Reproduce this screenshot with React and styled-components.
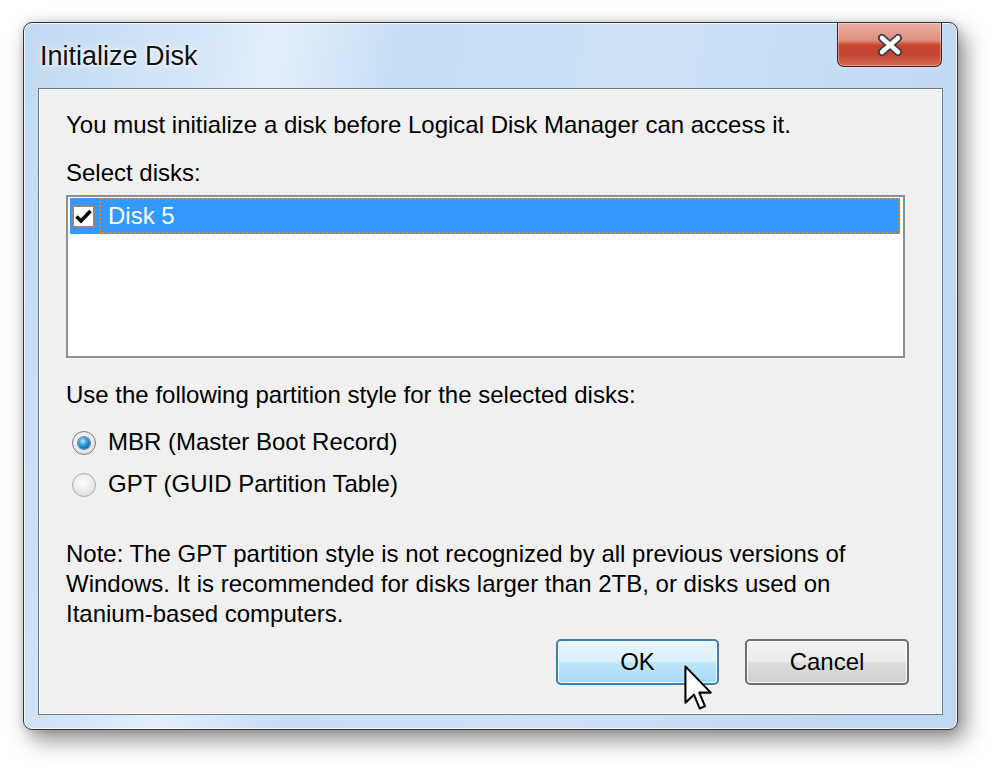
import styled, { createGlobalStyle } from "styled-components";

const GlobalStyle = createGlobalStyle`
  html, body {
    margin: 0;
    padding: 0;
    background: #ffffff;
  }
  body {
    font-family: "Liberation Sans", Arial, sans-serif;
    color: #000;
  }
`;

const Page = styled.div`
  width: 1000px;
  height: 772px;
  padding: 22px 0 0 23px;
  box-sizing: border-box;
  overflow: hidden;
`;

const Window = styled.div`
  position: relative;
  width: 935px;
  box-sizing: border-box;
  border: 1px solid #30363d;
  border-radius: 9px;
  padding: 0 14px 14px 14px;
  display: flex;
  flex-direction: column;
  background: linear-gradient(
    100deg,
    #c2daf3 0%,
    #d6e7f8 18%,
    #e4effa 24%,
    #c8def5 36%,
    #cfe2f6 60%,
    #c6dcf4 80%,
    #bfd8f2 100%
  );
  box-shadow: inset 0 0 0 1px rgba(255, 255, 255, 0.75),
    7px 10px 22px rgba(0, 0, 0, 0.45), 0 0 8px rgba(0, 0, 0, 0.14);
`;

const TitleBar = styled.div`
  height: 65px;
  display: flex;
  align-items: center;
  margin: 0 1px 0 2px;
`;

const Title = styled.div`
  font-family: "Liberation Sans", Arial, sans-serif;
  font-size: 27px;
  color: #111;
  padding-top: 2px;
  text-shadow: 0 0 8px rgba(255, 255, 255, 0.95), 0 0 3px #fff;
  flex: 1;
`;

const CloseButton = styled.div`
  align-self: flex-start;
  width: 105px;
  height: 44px;
  box-sizing: border-box;
  border: 1px solid #4a2019;
  border-top: none;
  border-radius: 0 0 7px 7px;
  background: linear-gradient(
    #eab0a4 0%,
    #df8e7e 40%,
    #c8452c 52%,
    #c44430 72%,
    #d26a55 100%
  );
  box-shadow: inset 0 0 0 1px rgba(255, 255, 255, 0.35);
  display: flex;
  align-items: center;
  justify-content: center;
`;

const Client = styled.div`
  background: #f0f0f0;
  border: 1px solid #6a7a8b;
  box-shadow: inset 0 0 0 1px #ffffff;
  padding: 21px 33px 29px 27px;
  display: flex;
  flex-direction: column;
`;

const Text = styled.div`
  font-size: 24px;
  line-height: 30px;
  white-space: nowrap;
  margin-top: ${(p) => p.$mt || 0}px;
`;

const ListBox = styled.div`
  width: 839px;
  height: 163px;
  box-sizing: border-box;
  margin-top: 7px;
  border: 2px solid #8b9096;
  background: #fff;
  padding: 1px 3px 0 2px;
`;

const ListRow = styled.div`
  height: 36px;
  background: #3399ff;
  display: flex;
  align-items: center;
  padding-left: 2px;
`;

const CheckBox = styled.div`
  width: 23px;
  height: 23px;
  box-sizing: border-box;
  border: 2px solid #8a8a8a;
  background: #fff;
  display: flex;
  align-items: center;
  justify-content: center;
  flex-shrink: 0;
`;

const FocusLabel = styled.div`
  flex: 1;
  align-self: stretch;
  margin-left: 4px;
  border: 2px dotted #e5801c;
  color: #fff;
  font-size: 24px;
  display: flex;
  align-items: center;
  padding-left: 7px;
`;

const RadioGroup = styled.div`
  margin-top: 17px;
  display: flex;
  flex-direction: column;
  gap: 12px;
`;

const RadioRow = styled.div`
  display: flex;
  align-items: center;
  height: 30px;
  padding-left: 6px;
  gap: 12px;
  font-size: 24px;
  white-space: nowrap;
`;

const RadioCircle = styled.div`
  width: 24px;
  height: 24px;
  box-sizing: border-box;
  border-radius: 50%;
  border: 1px solid ${(p) => (p.$checked ? "#7a7f86" : "#a9acb0")};
  background: radial-gradient(circle at 45% 40%, #ffffff 0%, #e9e9e9 55%, #cfd0d2 100%);
  display: flex;
  align-items: center;
  justify-content: center;
  flex-shrink: 0;
  margin-top: 2px;
`;

const RadioDot = styled.div`
  width: 12px;
  height: 12px;
  border-radius: 50%;
  background: radial-gradient(circle at 40% 35%, #b8ecff 0%, #3aa0e0 35%, #15609e 75%, #0c3e6c 100%);
  box-shadow: 0 0 0 1px rgba(20, 60, 100, 0.6);
`;

const ButtonRow = styled.div`
  margin-top: 10px;
  display: flex;
  justify-content: flex-end;
  gap: 26px;
`;

const Button = styled.div`
  position: relative;
  width: ${(p) => p.$w}px;
  height: 46px;
  box-sizing: border-box;
  border-radius: 5px;
  border: 2px solid ${(p) => (p.$hot ? "#3c7fb1" : "#707070")};
  background: ${(p) =>
    p.$hot
      ? "linear-gradient(#eaf6fd 0%, #d9f0fc 48%, #bee6fd 52%, #a7d9f5 100%)"
      : "linear-gradient(#f3f3f3 0%, #ebebeb 48%, #dddddd 52%, #cfcfcf 100%)"};
  box-shadow: inset 0 0 0 1px rgba(255, 255, 255, 0.8);
  display: flex;
  align-items: center;
  justify-content: center;
  font-size: 24px;
`;

const Cursor = styled.svg`
  position: absolute;
  left: 126px;
  top: 24px;
  width: 30px;
  height: 46px;
  overflow: visible;
`;

export default function App() {
  return (
    <>
      <GlobalStyle />
      <Page>
        <Window>
          <TitleBar>
            <Title>Initialize Disk</Title>
            <CloseButton>
              <svg width="28" height="22" viewBox="0 0 28 22">
                <path
                  d="M6 4 L22 18 M22 4 L6 18"
                  stroke="#3a3f47"
                  strokeWidth="8"
                  strokeLinecap="round"
                />
                <path
                  d="M6 4 L22 18 M22 4 L6 18"
                  stroke="#ffffff"
                  strokeWidth="4.5"
                  strokeLinecap="round"
                />
              </svg>
            </CloseButton>
          </TitleBar>
          <Client>
            <Text>You must initialize a disk before Logical Disk Manager can access it.</Text>
            <Text $mt={18}>Select disks:</Text>
            <ListBox>
              <ListRow>
                <CheckBox>
                  <svg width="17" height="15" viewBox="0 0 17 15">
                    <path
                      d="M1.5 7.5 L6 12 L15.5 2"
                      fill="none"
                      stroke="#000"
                      strokeWidth="3.6"
                    />
                  </svg>
                </CheckBox>
                <FocusLabel>Disk 5</FocusLabel>
              </ListRow>
            </ListBox>
            <Text $mt={22}>Use the following partition style for the selected disks:</Text>
            <RadioGroup>
              <RadioRow>
                <RadioCircle $checked>
                  <RadioDot />
                </RadioCircle>
                MBR (Master Boot Record)
              </RadioRow>
              <RadioRow>
                <RadioCircle />
                GPT (GUID Partition Table)
              </RadioRow>
            </RadioGroup>
            <Text $mt={40}>
              Note: The GPT partition style is not recognized by all previous versions of
              <br />
              Windows. It is recommended for disks larger than 2TB, or disks used on
              <br />
              Itanium-based computers.
            </Text>
            <ButtonRow>
              <Button $w={163} $hot>
                OK
                <Cursor viewBox="0 0 13 20">
                  <path
                    d="M0.6 0.6 L0.6 16.4 L4.3 12.9 L6.8 18.9 L9.1 17.9 L6.6 12 L11.6 12 Z"
                    fill="#fff"
                    stroke="#000"
                    strokeWidth="0.9"
                    strokeLinejoin="round"
                  />
                </Cursor>
              </Button>
              <Button $w={164}>Cancel</Button>
            </ButtonRow>
          </Client>
        </Window>
      </Page>
    </>
  );
}
